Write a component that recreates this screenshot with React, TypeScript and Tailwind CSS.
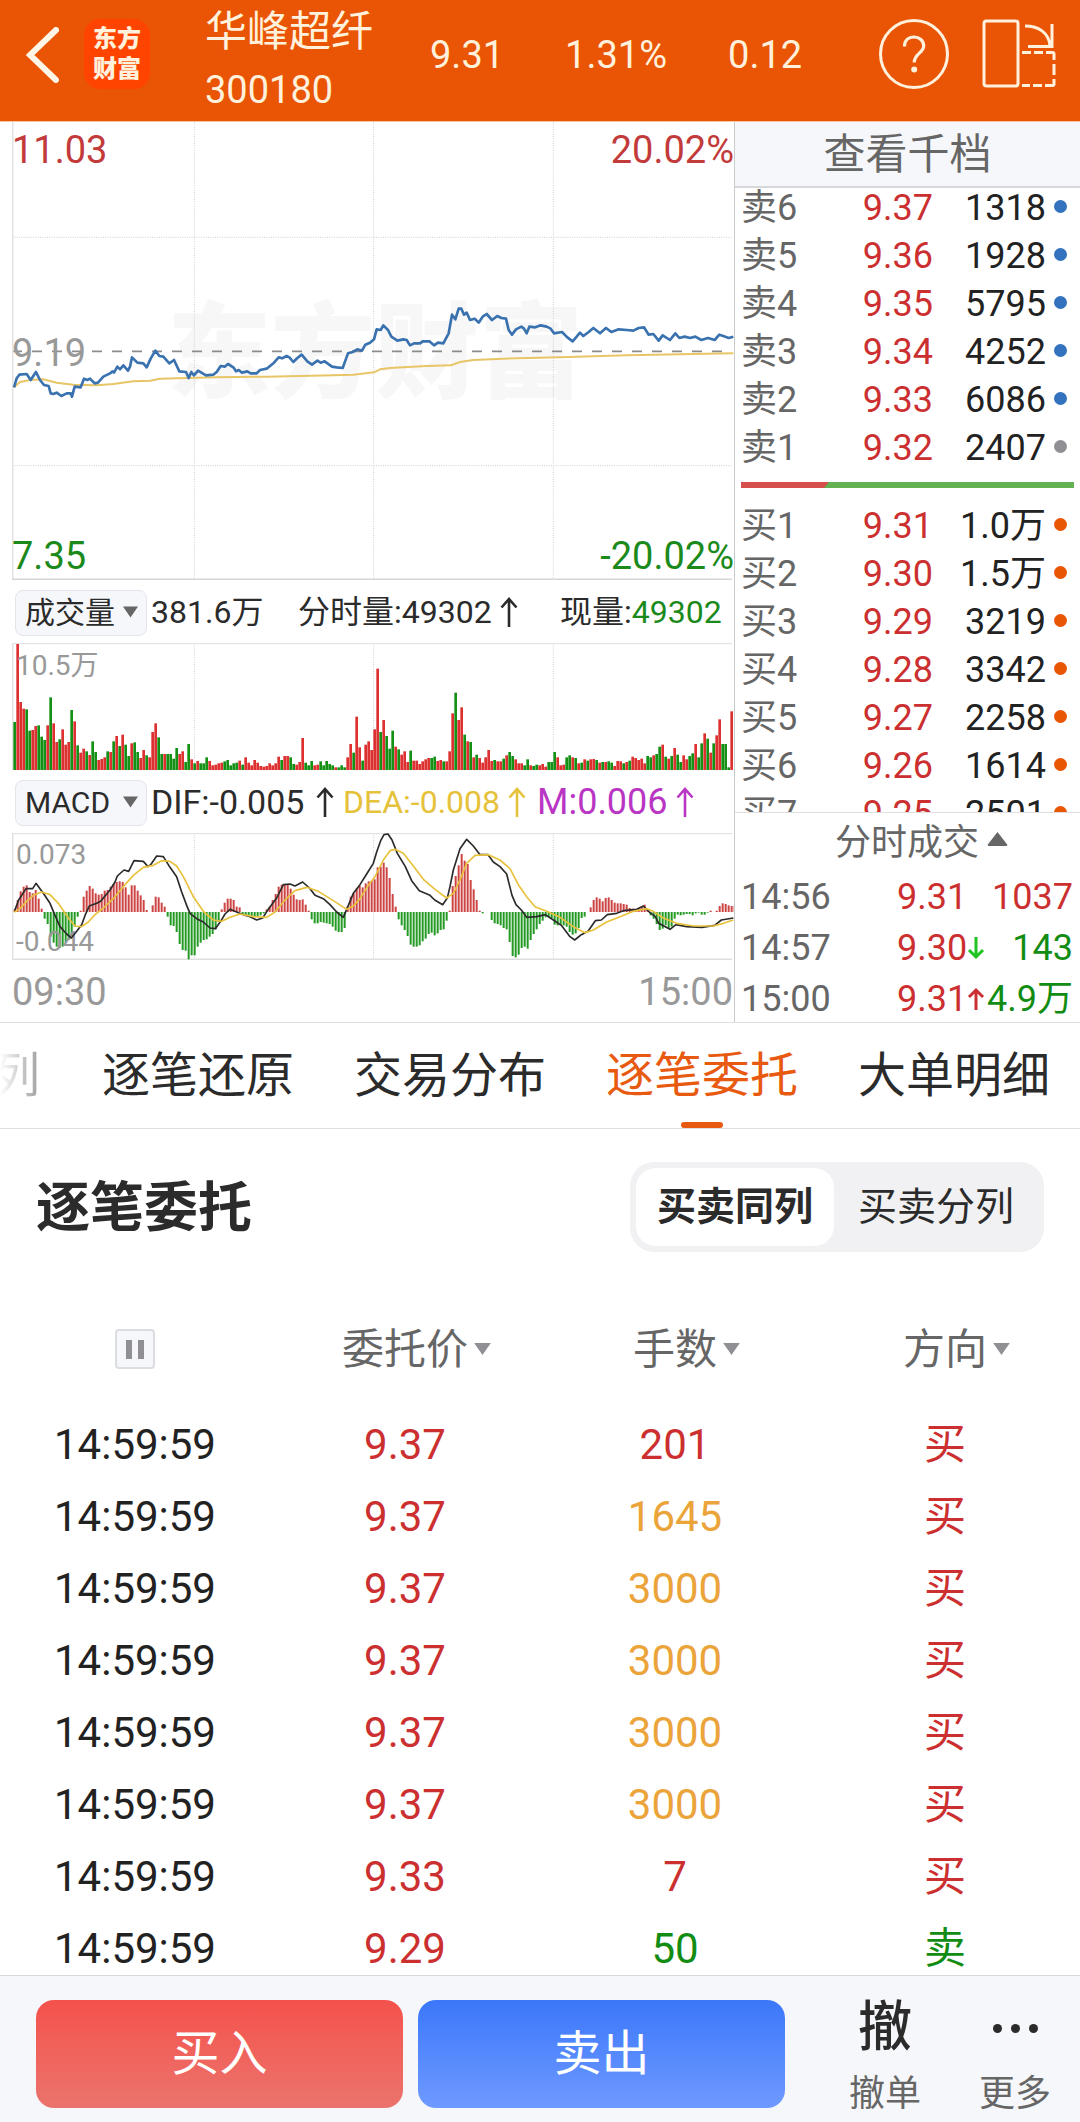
import { useState } from "react";

type Side = "buy" | "sell";

interface Level {
  label: string;
  price: string;
  volume: string;
  dot: string;
}

interface Trade {
  time: string;
  price: string;
  arrow?: "up" | "down";
  volume: string;
  color: string;
}

interface Order {
  time: string;
  price: string;
  lots: string;
  lotsColor: string;
  side: Side;
}

const sellLevels: Level[] = [
  { label: "卖6", price: "9.37", volume: "1318", dot: "bg-[#3372bd]" },
  { label: "卖5", price: "9.36", volume: "1928", dot: "bg-[#3372bd]" },
  { label: "卖4", price: "9.35", volume: "5795", dot: "bg-[#3372bd]" },
  { label: "卖3", price: "9.34", volume: "4252", dot: "bg-[#3372bd]" },
  { label: "卖2", price: "9.33", volume: "6086", dot: "bg-[#3372bd]" },
  { label: "卖1", price: "9.32", volume: "2407", dot: "bg-[#8f8f94]" },
];

const buyLevels: Level[] = [
  { label: "买1", price: "9.31", volume: "1.0万", dot: "bg-[#e85604]" },
  { label: "买2", price: "9.30", volume: "1.5万", dot: "bg-[#e85604]" },
  { label: "买3", price: "9.29", volume: "3219", dot: "bg-[#e85604]" },
  { label: "买4", price: "9.28", volume: "3342", dot: "bg-[#e85604]" },
  { label: "买5", price: "9.27", volume: "2258", dot: "bg-[#e85604]" },
  { label: "买6", price: "9.26", volume: "1614", dot: "bg-[#e85604]" },
  { label: "买7", price: "9.25", volume: "2501", dot: "bg-[#e85604]" },
];

const trades: Trade[] = [
  { time: "14:56", price: "9.31", volume: "1037", color: "text-[#cc2f2f]" },
  { time: "14:57", price: "9.30", arrow: "down", volume: "143", color: "text-[#128c12]" },
  { time: "15:00", price: "9.31", arrow: "up", volume: "4.9万", color: "text-[#128c12]" },
];

const orders: Order[] = [
  { time: "14:59:59", price: "9.37", lots: "201", lotsColor: "text-[#cc2f2f]", side: "buy" },
  { time: "14:59:59", price: "9.37", lots: "1645", lotsColor: "text-[#eba43a]", side: "buy" },
  { time: "14:59:59", price: "9.37", lots: "3000", lotsColor: "text-[#eba43a]", side: "buy" },
  { time: "14:59:59", price: "9.37", lots: "3000", lotsColor: "text-[#eba43a]", side: "buy" },
  { time: "14:59:59", price: "9.37", lots: "3000", lotsColor: "text-[#eba43a]", side: "buy" },
  { time: "14:59:59", price: "9.37", lots: "3000", lotsColor: "text-[#eba43a]", side: "buy" },
  { time: "14:59:59", price: "9.33", lots: "7", lotsColor: "text-[#cc2f2f]", side: "buy" },
  { time: "14:59:59", price: "9.29", lots: "50", lotsColor: "text-[#128c12]", side: "sell" },
];

const tabs = ["逐笔还原", "交易分布", "逐笔委托", "大单明细"];

// Chart series, three units per pixel
const priceLine =
  "42,622 50,595 58,584 80,582 92,600 108,576 120,600 132,615 146,618 152,640 160,642 170,638 184,648 200,640 212,640 216,650 224,620 242,622 252,596 262,600 270,596 284,610 294,608 310,590 330,580 338,574 342,578 352,560 360,568 370,556 384,572 390,560 396,532 412,548 430,550 440,562 452,536 466,512 478,528 490,530 508,550 522,540 538,574 558,576 566,594 574,576 582,586 594,572 618,586 640,584 650,576 662,558 674,560 684,552 700,562 708,574 716,570 726,578 742,574 752,580 770,580 780,570 800,566 822,548 836,532 846,535 860,528 868,532 880,546 892,534 905,524 922,544 936,554 952,542 962,548 974,544 996,560 1010,562 1028,564 1036,542 1044,520 1058,516 1072,508 1086,512 1096,494 1110,488 1122,478 1130,448 1142,450 1150,436 1164,450 1174,470 1192,482 1210,478 1220,480 1230,496 1242,490 1260,490 1268,484 1288,484 1302,496 1314,488 1330,490 1346,460 1356,404 1366,418 1376,386 1384,386 1392,404 1400,398 1410,420 1424,416 1436,428 1448,410 1460,402 1476,420 1492,408 1504,414 1518,416 1526,450 1536,464 1548,448 1564,440 1572,446 1580,460 1588,440 1606,442 1622,436 1640,440 1652,446 1662,460 1686,456 1702,472 1718,484 1730,470 1740,458 1750,468 1766,456 1780,444 1800,460 1818,444 1834,456 1856,448 1880,450 1900,452 1916,444 1932,442 1946,464 1960,462 1976,482 1988,466 2010,480 2026,460 2038,474 2054,470 2070,474 2086,470 2104,480 2124,474 2144,480 2158,464 2170,468 2186,474 2200,470";

const averageLine =
  "42,622 60,606 90,600 130,598 170,608 220,614 290,616 340,612 400,604 450,602 480,596 560,594 650,592 800,590 900,588 1000,586 1060,584 1122,577 1140,568 1170,564 1210,562 1280,558 1352,556 1380,546 1420,540 1510,536 1680,532 1880,526 2040,523 2200,520";

const difLine =
  "44,1022 56,990 78,956 98,956 108,940 120,956 130,970 150,1000 165,1036 180,1070 200,1092 214,1104 230,1084 245,1064 256,1034 268,1008 290,1000 302,994 330,960 345,936 352,918 372,900 386,904 402,872 430,874 444,890 452,884 470,858 490,860 510,892 530,920 545,966 560,1006 570,1030 590,1046 610,1056 630,1074 646,1076 662,1054 675,1032 690,1018 710,1026 730,1034 750,1040 770,1050 788,1044 806,1016 830,984 850,944 870,942 885,948 908,936 930,956 945,976 970,986 990,1004 1010,1026 1030,1042 1045,1006 1060,970 1080,944 1100,912 1120,880 1130,846 1142,812 1152,794 1164,792 1176,810 1192,850 1216,890 1235,932 1258,962 1290,976 1304,990 1328,1004 1342,984 1350,950 1360,900 1380,836 1400,808 1420,828 1440,854 1464,854 1480,876 1500,890 1520,912 1536,976 1548,1004 1564,1020 1580,1042 1610,1040 1636,1034 1660,1050 1684,1066 1710,1100 1724,1110 1744,1094 1764,1084 1786,1052 1804,1050 1822,1034 1850,1030 1870,1022 1910,1018 1930,1008 1950,1028 1966,1040 1976,1060 2010,1078 2028,1064 2060,1070 2106,1072 2144,1066 2164,1050 2200,1044";

const deaLine =
  "44,1026 60,1016 80,994 100,976 125,966 150,974 175,1000 205,1044 225,1068 245,1070 265,1056 285,1034 310,1014 340,986 370,950 400,916 430,892 460,886 485,872 510,874 530,888 550,920 580,980 610,1024 640,1050 665,1054 690,1042 720,1032 760,1040 800,1042 825,1026 855,990 885,962 920,952 955,964 1000,992 1040,1018 1060,1008 1080,986 1105,946 1125,920 1150,870 1170,842 1185,838 1210,850 1240,888 1270,928 1305,958 1340,984 1360,970 1380,930 1400,880 1425,856 1465,854 1500,870 1530,896 1555,944 1580,980 1605,1010 1640,1024 1680,1042 1720,1070 1755,1088 1780,1080 1820,1056 1860,1040 1900,1024 1940,1016 1960,1024 1990,1044 2030,1060 2080,1068 2140,1068 2170,1060 2200,1050";

// Minute volume, negative when the minute closed lower
const volumes = [
  -144, 378, 204, 184, -182, -118, 120, 132, -134, -100, -90, 134, -218, 140, 84, -92, 122, 76, 84, -180, 146, -74, 52,
  64, -56, 45, -86, -54, 30, 33, 38, -56, 54, -86, 102, -72, 106, -76, -42, 80, -83, -54, 36, 60, -44, 38, 114, 140, -98,
  -48, 48, -48, -48, -34, -66, 48, 56, -24, -78, 32, -20, 27, -20, -20, -38, 27, 14, 16, 20, 22, -26, -30, -14, -20, -22,
  28, -16, 38, 22, 14, 30, 22, 12, 10, 12, 20, 14, 20, 40, -30, 42, 42, -38, -18, 16, 24, 96, -22, -14, -27, 14, 16, -26,
  -14, -27, -18, -14, 8, -8, -14, -8, 38, 78, -52, 160, 68, -28, 76, 86, 60, 122, 304, -114, 150, -102, -64, -118, 70,
  -62, 46, 56, 24, -58, 28, 28, 18, 26, 32, 36, -36, -40, 27, 30, -26, 26, 56, 170, -232, 150, 188, -106, 86, -84, 38,
  -46, 36, 22, 38, 60, 27, -30, 26, 26, -34, 44, -54, -42, 32, 20, 20, -14, -32, 14, -12, -16, 14, 18, 10, -24, -24, -54,
  38, 14, 16, -38, -44, 38, -36, 20, -22, 32, -28, 32, 33, -30, 22, -24, 24, -26, -22, 12, 27, 26, -20, 24, -28, 40, 36,
  30, 34, 20, -42, -38, 44, -48, -70, 76, -40, 34, -42, 66, -46, -24, 44, 32, -42, -50, 78, -38, -80, 110, -94, 52, -80,
  104, 152, -78, -78, -8, 176,
];

const macdBars = [
  8, 36, 62, 76, 80, 60, 56, 66, 40, 10, -20, -36, -74, -92, -104, -108, -104, -92, -84, -72, -44, -14, 4, 46, 64, 78, 70,
  56, 52, 54, 64, 66, 76, 84, 90, 92, 90, 74, 52, 80, 80, 64, 50, 36, 6, 0, 20, 46, 44, 28, 16, -14, -40, -42, -60, -96,
  -114, -116, -142, -130, -130, -104, -92, -84, -82, -74, -66, -52, -30, 8, 28, 40, 40, 36, 16, 14, -6, -10, -10, -12,
  -14, -14, -10, -4, 8, 16, 36, 54, 76, 82, 84, 84, 70, 52, 38, 36, 38, 22, 4, -22, -34, -34, -30, -32, -34, -36, -44,
  -56, -60, -60, -48, 16, 46, 56, 70, 78, 74, 86, 92, 94, 98, 134, 136, 148, 134, 102, 54, 16, -22, -40, -54, -72, -98,
  -104, -104, -100, -88, -80, -66, -62, -70, -64, -54, -52, -26, 4, 78, 108, 140, 174, 154, 144, 96, 68, 36, 4, -4, 0, 0,
  -24, -34, -36, -40, -48, -52, -90, -132, -136, -128, -108, -104, -110, -84, -66, -52, -36, -26, -16, -16, -18, -38, -40,
  -38, -40, -44, -60, -68, -64, -48, -18, -14, 0, 14, 36, 44, 40, 32, 42, 44, 36, 28, 26, 26, 24, 22, 12, 10, 8, 12, 16,
  22, 8, -10, -20, -36, -54, -50, -40, -48, -44, -20, -8, -10, -8, -6, -6, -10, -4, -2, -8, -8, -2, 4, 0, 4, 18, 26, 24,
  20, 18, 18,
];

function Arrow({ className }: { className: string }) {
  return (
    <svg
      viewBox="0 0 18 32"
      className={className}
      fill="none"
      stroke="currentColor"
      strokeWidth="2.6"
      aria-hidden="true"
    >
      <path d="M9 31V3M1.500 11.500 9 3l7.500 8.500" />
    </svg>
  );
}

function SmallArrow({ down = false }: { down?: boolean }) {
  return (
    <svg
      viewBox="0 0 18 24"
      className={down ? "h-6 w-[18px] text-[#1fc41f]" : "h-6 w-[18px] text-[#cc2f2f]"}
      fill="none"
      stroke="currentColor"
      strokeWidth="3"
      aria-hidden="true"
    >
      {down ? <path d="M9 1v20M2 14l7 7 7-7" /> : <path d="M9 23V3M2 10l7-7 7 7" />}
    </svg>
  );
}

function Caret({ className, up = false }: { className: string; up?: boolean }) {
  return (
    <svg viewBox="0 0 18 13" className={className} fill="currentColor" aria-hidden="true">
      {up ? <path d="M9 0l9 11.500q.3 1.500-1 1.500H1q-1.300 0-1-1.500z" /> : <path d="M0 0h18L9 13z" />}
    </svg>
  );
}

function GridColumns({ height }: { height: number }) {
  return (
    <g stroke="#cfcfcf" strokeWidth="3" strokeDasharray="3 4">
      <path d={`M547 0V${height}M1085 0V${height}M1624 0V${height}`} />
    </g>
  );
}

function PriceChart() {
  return (
    <div className="relative h-[458px] text-[38px] leading-[38px]">
      <div className="absolute inset-0 flex items-center justify-center pt-2 pl-1 text-[104px] font-black text-[#f7f7f7]">
        东方财富
      </div>
      <svg viewBox="0 0 2166 1374" preserveAspectRatio="none" className="absolute inset-0 h-full w-full" fill="none">
        <GridColumns height={1374} />
        <path d="M0 346H2160M0 1031H2160" stroke="#cfcfcf" strokeWidth="3" strokeDasharray="3 4" />
        <path d="M0 688H2160" stroke="#8c8c8c" strokeWidth="5" strokeDasharray="30 30" />
        <path d="M2 0V1374" stroke="#e2e2e2" strokeWidth="5" />
        <path d="M0 1372H2160" stroke="#d6d6d6" strokeWidth="5" />
        <g transform="translate(-36 174)" strokeLinejoin="round">
          <polyline points={averageLine} stroke="#e8c566" strokeWidth="6" />
          <polyline points={priceLine} stroke="#3a72b0" strokeWidth="8" />
        </g>
      </svg>
      <div className="relative flex h-full flex-col justify-between pt-[9px] pb-[5px]">
        <div className="flex justify-between text-[#c23a3a]">
          <span>11.03</span>
          <span>20.02%</span>
        </div>
        <span className="text-[#999]">9.19</span>
        <div className="flex justify-between text-[#1b8a1b]">
          <span>7.35</span>
          <span>-20.02%</span>
        </div>
      </div>
    </div>
  );
}

function VolumeChart() {
  return (
    <div className="relative h-[127px]">
      <svg viewBox="0 0 2166 381" preserveAspectRatio="none" className="absolute inset-0 h-full w-full" fill="none">
        <GridColumns height={381} />
        <path d="M0 2H2160" stroke="#dedede" strokeWidth="3" />
        <path d="M2 0V381" stroke="#e2e2e2" strokeWidth="5" />
        {volumes.map((v, i) => (
          <rect
            key={i}
            x={4 + i * 9}
            y={381 - Math.abs(v)}
            width="8"
            height={Math.abs(v)}
            fill={v > 0 ? "#dd3030" : "#149014"}
          />
        ))}
      </svg>
      <span className="relative block pt-1 pl-1 text-[28px] leading-[38px] text-[#999]">10.5万</span>
    </div>
  );
}

function MacdChart() {
  return (
    <div className="relative h-[127px]">
      <svg viewBox="0 0 2166 381" preserveAspectRatio="none" className="absolute inset-0 h-full w-full" fill="none">
        <GridColumns height={381} />
        <path d="M0 2H2160" stroke="#dedede" strokeWidth="3" />
        <path d="M0 379H2160" stroke="#dedede" strokeWidth="5" />
        <path d="M2 0V381" stroke="#e2e2e2" strokeWidth="5" />
        {macdBars.map((v, i) => (
          <rect
            key={i}
            x={5 + i * 9}
            y={v > 0 ? 237 - v : 237}
            width="6"
            height={Math.abs(v)}
            fill={v > 0 ? "#cc4444" : "#239a23"}
          />
        ))}
      </svg>
      <div className="relative flex h-full flex-col justify-between pt-1 pl-1 text-[28px] leading-[36px] text-[#999]">
        <span>0.073</span>
        <span>-0.044</span>
      </div>
      <svg viewBox="0 0 2166 381" preserveAspectRatio="none" className="absolute inset-0 h-full w-full" fill="none">
        <g transform="translate(-36 -789)" strokeLinejoin="round">
          <polyline points={difLine} stroke="#2b2b2b" strokeWidth="5" />
          <polyline points={deaLine} stroke="#e8c23c" strokeWidth="5" />
        </g>
      </svg>
    </div>
  );
}

function IndicatorSelect({ label, options }: { label: string; options: string[] }) {
  return (
    <div className="relative mr-1 ml-[3px] h-[46px] w-[132px] shrink-0">
      <select
        aria-label={label}
        className="h-full w-full appearance-none rounded-lg border border-[#e2e5ea] bg-[#f6f7fa] pl-[9px] text-[30px] leading-[44px] text-[#2b2b2b]"
      >
        {options.map((o) => (
          <option key={o}>{o}</option>
        ))}
      </select>
      <Caret className="pointer-events-none absolute top-[17px] right-[9px] h-3 w-[15px] text-[#666]" />
    </div>
  );
}

function LevelTable({ levels, caption }: { levels: Level[]; caption: string }) {
  return (
    <table className="w-full table-fixed text-[36px] leading-[36px]" aria-label={caption}>
      <tbody>
        {levels.map((l) => (
          <tr key={l.label}>
            <td className="p-0 pb-3 text-[#666]">{l.label}</td>
            <td className="w-[92px] p-0 pb-3 text-right text-[#cc2f2f]">{l.price}</td>
            <td className="w-[113px] p-0 pb-3 text-right text-[#222]">{l.volume}</td>
            <td className="w-[21px] p-0 pb-4">
              <span className={`ml-auto block size-[13px] rounded-full ${l.dot}`} />
            </td>
          </tr>
        ))}
      </tbody>
    </table>
  );
}

function Header() {
  return (
    <header className="flex h-[122px] shrink-0 items-center border-b border-[#f9c59c] bg-[#e95504] pr-6 pl-[26px] text-[38px] leading-[38px] text-[#fff1dc]">
      <button aria-label="返回">
        <svg viewBox="0 0 33 56" className="mb-3 h-14 w-[33px]" fill="none" stroke="#fff6e8" strokeWidth="6">
          <path d="M30 3 4 28l26 25" strokeLinecap="round" strokeLinejoin="miter" />
        </svg>
      </button>
      <div className="mb-[14px] ml-[25px] flex h-[70px] w-[66px] flex-col items-center justify-center rounded-2xl bg-[#ff4400] text-[24px] leading-[30px] font-black">
        <span>东方</span>
        <span>财富</span>
      </div>
      <div className="mb-1 ml-[55px] flex flex-col gap-4">
        <h1 className="text-[42px] leading-[46px]">华峰超纤</h1>
        <span>300180</span>
      </div>
      <div className="mb-3 ml-[57px] flex gap-[61px]">
        <span>9.31</span>
        <span>1.31%</span>
        <span>0.12</span>
      </div>
      <div className="mb-[14px] ml-auto flex gap-[33px]">
        <button
          aria-label="帮助"
          className="flex size-[70px] items-center justify-center rounded-full border-[3px] border-[#fff1dc]"
        >
          <svg viewBox="0 0 24 38" className="h-[38px] w-6" fill="none" stroke="currentColor" strokeWidth="3.2">
            <path d="M2.500 11.500C2.500 5.500 6.500 2 12 2s9.700 3.500 9.700 9c0 7-9.500 7.500-9.500 16.500" />
            <circle cx="12.200" cy="34.500" r="3" fill="currentColor" stroke="none" />
          </svg>
        </button>
        <button aria-label="横屏">
          <svg viewBox="0 0 74 70" className="h-[70px] w-[74px]" fill="none" stroke="currentColor" strokeWidth="3">
            <rect x="2" y="2" width="34" height="65" rx="2.500" />
            <path d="M43 7c14 0 24 7 25 20M70 5v22.500H46" />
            <path d="M40 33.500h9M52 33.500h9M64 33.500h6.500q1.500 0 1.500 1.500v6M72 45v11M72 60v5q0 1.500-1.500 1.500H63M60 66.500h-9M48 66.500h-8" />
          </svg>
        </button>
      </div>
    </header>
  );
}

export default function App() {
  const [tab, setTab] = useState("逐笔委托");
  const [split, setSplit] = useState(false);

  return (
    <div className="flex h-screen flex-col overflow-hidden bg-white font-[Roboto,'Noto_Sans_CJK_SC',sans-serif] text-[#2b2b2b]">
      <Header />

      {/* Quote area */}
      <section className="grid shrink-0 grid-cols-[minmax(0,1fr)_346px] border-b border-[#dfdfdf]">
        <div className="pl-3">
          <PriceChart />
          <div className="flex h-[63px] items-center text-[32px] leading-[46px] whitespace-nowrap">
            <IndicatorSelect label="成交量指标" options={["成交量", "成交额"]} />
            <span className="w-[147px]">381.6万</span>
            <span className="flex w-[262px] items-center gap-2">
              分时量:49302
              <Arrow className="h-8 w-[18px]" />
            </span>
            <span>
              现量:<span className="text-[#1b8a1b]">49302</span>
            </span>
          </div>
          <VolumeChart />
          <div className="flex h-[63px] items-center text-[32px] leading-[46px] whitespace-nowrap">
            <IndicatorSelect label="技术指标" options={["MACD", "KDJ", "RSI"]} />
            <span className="flex w-[192px] items-center gap-3 text-[34px]">
              DIF:-0.005
              <Arrow className="h-8 w-[18px]" />
            </span>
            <span className="flex w-[194px] items-center gap-2 text-[#e6c13a]">
              DEA:-0.008
              <Arrow className="h-8 w-[18px]" />
            </span>
            <span className="flex items-center gap-2 text-[36px] text-[#b936c4]">
              M:0.006
              <Arrow className="h-8 w-[18px]" />
            </span>
          </div>
          <MacdChart />
          <div className="flex h-[62px] items-center justify-between pt-[2px] pr-px text-[38px] text-[#999]">
            <span>09:30</span>
            <span>15:00</span>
          </div>
        </div>

        <aside className="flex flex-col border-l border-[#c9cacc]">
          <button className="h-[66px] border-b-2 border-[#d5d7da] bg-[#f6f7fa] text-[42px] leading-[66px] text-[#666]">
            查看千档
          </button>
          <div className="h-[624px] overflow-hidden pt-[2px] pr-[13px] pl-[6px]">
            <LevelTable levels={sellLevels} caption="卖盘" />
            <div className="mt-1 mr-[-7px] mb-5 flex h-[6px] bg-[#62b152]">
              <svg viewBox="0 0 88 6" className="h-[6px] w-[88px]" fill="#d5504d" aria-hidden="true">
                <path d="M0 0h88l-5 6H0z" />
              </svg>
            </div>
            <LevelTable levels={buyLevels} caption="买盘" />
          </div>
          <button className="flex h-[59px] items-center justify-center gap-2 border-t border-[#dfdfdf] pt-[2px] pl-7 text-[36px] text-[#666]">
            分时成交
            <Caret up className="mb-2 h-[14px] w-[21px]" />
          </button>
          <table className="mt-2 mr-[7px] ml-[6px] table-fixed text-[36px] leading-[36px]" aria-label="分时成交明细">
            <tbody className="[&>tr:last-child>td]:pb-0">
              {trades.map((t) => (
                <tr key={t.time} className="whitespace-nowrap">
                  <td className="p-0 pb-[15px] text-[#666]">{t.time}</td>
                  <td className="w-[89px] p-0 pb-[15px] text-[#cc2f2f]">
                    <span className="flex items-center">
                      {t.price}
                      {t.arrow && <SmallArrow down={t.arrow === "down"} />}
                    </span>
                  </td>
                  <td className={`w-[87px] p-0 pb-[15px] text-right ${t.color}`}>{t.volume}</td>
                </tr>
              ))}
            </tbody>
          </table>
        </aside>
      </section>

      {/* Tabs */}
      <nav className="flex h-[106px] shrink-0 gap-[60px] overflow-hidden border-b border-[#dfdfdf] text-[48px] whitespace-nowrap">
        <button className="flex w-[42px] shrink-0 items-center justify-end bg-gradient-to-r from-white to-[#999] bg-clip-text pr-[2px] text-transparent">
          列
        </button>
        {tabs.map((t) => (
          <button
            key={t}
            onClick={() => setTab(t)}
            className={t === tab ? "relative shrink-0 text-[#e85a10]" : "relative shrink-0"}
          >
            {t}
            {t === tab && (
              <span className="absolute bottom-0 left-1/2 h-[6px] w-[42px] -translate-x-1/2 rounded-full bg-[#e85a10]" />
            )}
          </button>
        ))}
      </nav>

      {/* Order list */}
      <section className="min-h-0 flex-1 overflow-hidden pt-[33px]">
        <div className="flex items-center justify-between pr-9 pl-9">
          <h2 className="pt-1 text-[54px] leading-[80px] font-bold">逐笔委托</h2>
          <div className="flex h-[90px] rounded-3xl bg-[#f1f1f3] p-[6px] text-[39px]">
            <button
              onClick={() => setSplit(false)}
              className={split ? "w-[198px] rounded-[20px]" : "w-[198px] rounded-[20px] bg-white font-bold"}
            >
              买卖同列
            </button>
            <button
              onClick={() => setSplit(true)}
              className={split ? "w-[204px] rounded-[20px] bg-white font-bold" : "w-[204px] rounded-[20px]"}
            >
              买卖分列
            </button>
          </div>
        </div>

        <table className="mt-[38px] w-full table-fixed text-center text-[42px]">
          <thead>
            <tr className="h-[118px] text-[#666]">
              <th className="p-0">
                <button
                  aria-label="暂停"
                  className="mx-auto flex size-10 items-center justify-center gap-[6px] rounded border-2 border-[#dcdde0] bg-[#f6f7fa]"
                >
                  <span className="h-[19px] w-[6px] bg-[#8f8f94]" />
                  <span className="h-[19px] w-[6px] bg-[#8f8f94]" />
                </button>
              </th>
              {["委托价", "手数", "方向"].map((h) => (
                <th key={h} className="p-0 font-normal">
                  <button className="relative">
                    {h}
                    <Caret className="absolute top-1/2 left-full ml-[6px] h-3 w-[17px] -translate-y-1/2 text-[#8f8f94]" />
                  </button>
                </th>
              ))}
            </tr>
          </thead>
          <tbody>
            {orders.map((o, i) => (
              <tr key={i} className="h-[72px]">
                <td className="p-0 text-[#222]">{o.time}</td>
                <td className="p-0 text-[#cc2f2f]">{o.price}</td>
                <td className={`p-0 ${o.lotsColor}`}>{o.lots}</td>
                <td className={o.side === "buy" ? "p-0 text-[#cc2f2f]" : "p-0 text-[#128c12]"}>
                  {o.side === "buy" ? "买" : "卖"}
                </td>
              </tr>
            ))}
          </tbody>
        </table>
      </section>

      {/* Footer */}
      <footer className="flex shrink-0 items-start border-t border-[#d5d7da] bg-[#f6f7fa] pt-6 pb-[10px] pl-9">
        <div className="flex flex-1 gap-[15px] text-[48px] text-white">
          <button className="h-[108px] flex-1 rounded-[18px] bg-gradient-to-b from-[#f4514b] to-[#eb736d]">买入</button>
          <button className="h-[108px] flex-1 rounded-[18px] bg-gradient-to-b from-[#3b77fa] to-[#6e99ff]">卖出</button>
        </div>
        <div className="ml-[35px] flex pt-[2px] text-[36px] leading-[36px] text-[#666]">
          <button className="flex w-[130px] flex-col items-center gap-[22px]">
            <span className="text-[54px] leading-[52px] font-medium text-[#2b2b2b]">撤</span>
            撤单
          </button>
          <button className="flex w-[130px] flex-col items-center gap-[22px]">
            <span className="flex h-[52px] items-center gap-[9px]">
              <span className="size-[9px] rounded-full bg-[#2b2b2b]" />
              <span className="size-[9px] rounded-full bg-[#2b2b2b]" />
              <span className="size-[9px] rounded-full bg-[#2b2b2b]" />
            </span>
            更多
          </button>
        </div>
      </footer>
    </div>
  );
}
